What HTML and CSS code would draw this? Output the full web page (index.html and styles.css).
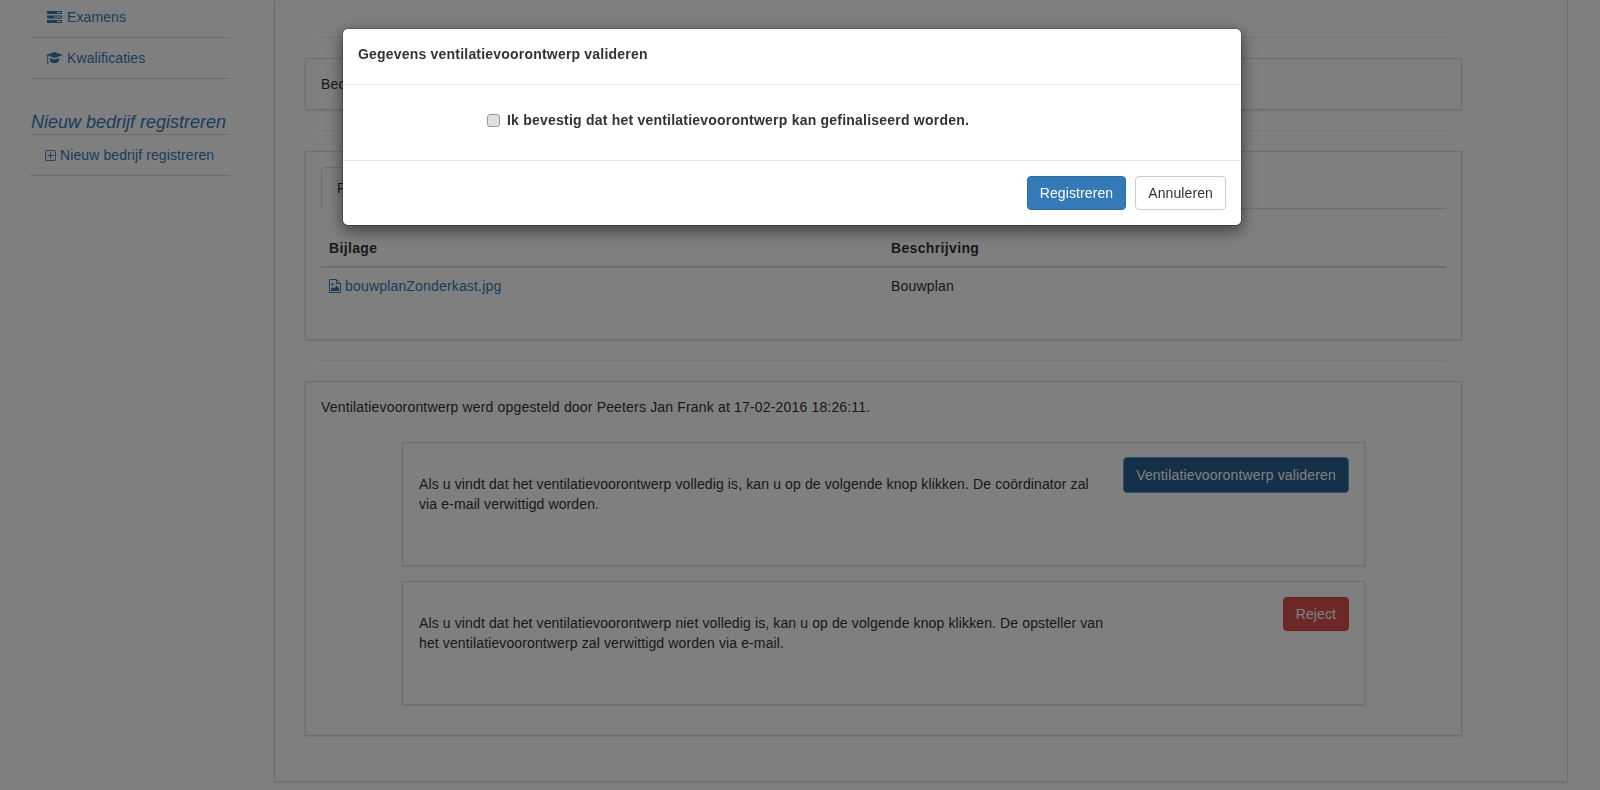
FILE: index.html
```html
<!DOCTYPE html>
<html lang="en">

<head>
    <meta charset="UTF-8">
    <meta name="viewport" content="width=device-width, initial-scale=1.0">
    <title>Ventilatievoorontwerp</title>
    <link rel="stylesheet" href="styles.css">
</head>

<body>
    <div class="page">
        <aside class="sidebar">
            <ul class="side-list">
                <li class="side-item first">
                    <a href="#">
                        <svg class="icon icon-wide" viewBox="0 0 17 12"><path fill-rule="evenodd" d="M1 0h15v3H1zM11 1v1h4V1zM1 4.500h15v3H1zM8 5.500v1h7v-1zM1 9h15v3H1zM11 10v1h4v-1z" fill="#337ab7"/></svg>
                        Examens
                    </a>
                </li>
                <li class="side-item second">
                    <a href="#">
                        <svg class="icon icon-wide" viewBox="0 0 17 12"><path d="M8.500 0 17 3 8.500 6 0 3zM4 6 8.500 7.500 13 6v3c-1 1.500-2.500 2-4.500 2S5 10.500 4 9zM1.300 3.500h.8V8l.5 3.500H.8L1.300 8z" fill="#337ab7"/></svg>
                        Kwalificaties
                    </a>
                </li>
            </ul>
            <h4 class="side-title">Nieuw bedrijf registreren</h4>
            <ul class="side-list">
                <li class="side-item plain">
                    <a href="#">
                        <svg class="icon icon-plus" viewBox="0 0 12 12"><path d="M2 .5h8A1.500 1.500 0 0 1 11.500 2v8A1.500 1.500 0 0 1 10 11.500H2A1.500 1.500 0 0 1 .5 10V2A1.500 1.500 0 0 1 2 .5zM6 2.500v7M2.500 6h7" fill="none" stroke="#337ab7"/></svg>
                        Nieuw bedrijf registreren
                    </a>
                </li>
            </ul>
        </aside>

        <main class="main-panel">
            <hr class="divider first-divider">
            <div class="box box-short">Beoordeling</div>
            <hr class="divider">
            <div class="box box-files">
                <ul class="tabs">
                    <li class="tab">Plannen</li>
                </ul>
                <div class="file-row file-head">
                    <div class="file-col">Bijlage</div>
                    <div>Beschrijving</div>
                </div>
                <div class="file-row">
                    <div class="file-col">
                        <a href="#">
                            <svg class="icon icon-file" viewBox="0 0 12 14"><path d="M.5.500h7l4 4v9H.5zM7.500.500v4h4" fill="none" stroke="#337ab7"/><circle cx="3.500" cy="5.500" r="1.200" fill="#337ab7"/><path d="M2 12V9.500L3.500 8 5 9.500 7.500 6.500 10 9v3z" fill="#337ab7"/></svg>
                            bouwplanZonderkast.jpg
                        </a>
                    </div>
                    <div>Bouwplan</div>
                </div>
            </div>
            <hr class="divider">
            <div class="box box-actions">
                <p class="author">Ventilatievoorontwerp werd opgesteld door Peeters Jan Frank at 17-02-2016 18:26:11.</p>
                <div class="action-box">
                    <p class="action-text">Als u vindt dat het ventilatievoorontwerp volledig is, kan u op de volgende knop klikken. De coördinator zal via e-mail verwittigd worden.</p>
                    <button class="btn btn-focus">Ventilatievoorontwerp valideren</button>
                </div>
                <div class="action-box">
                    <p class="action-text">Als u vindt dat het ventilatievoorontwerp niet volledig is, kan u op de volgende knop klikken. De opsteller van het ventilatievoorontwerp zal verwittigd worden via e-mail.</p>
                    <button class="btn btn-danger">Reject</button>
                </div>
            </div>
        </main>
    </div>

    <div class="backdrop"></div>

    <div class="modal">
        <div class="modal-header">Gegevens ventilatievoorontwerp valideren</div>
        <div class="modal-body">
            <label class="confirm"><input type="checkbox"> Ik bevestig dat het ventilatievoorontwerp kan gefinaliseerd worden.</label>
        </div>
        <div class="modal-footer">
            <button class="btn btn-primary">Registreren</button>
            <button class="btn btn-default">Annuleren</button>
        </div>
    </div>
</body>

</html>
```

FILE: styles.css
```css
* {
    box-sizing: border-box;
}

html,
body {
    height: 100%;
    margin: 0;
    overflow: hidden;
}

body {
    font-family: "Liberation Sans", Arial, sans-serif;
    font-size: 14px;
    line-height: 20px;
    letter-spacing: 0.17px;
    color: #333;
    background-color: #fff;
}

a {
    color: #337ab7;
    text-decoration: none;
}

p {
    margin: 0;
}

.page {
    display: flex;
    align-items: flex-start;
    padding-left: 30px;
}

/* left menu */
.sidebar {
    width: 200px;
    flex-shrink: 0;
    letter-spacing: 0.1px;
}

.side-list {
    list-style: none;
    margin: 0;
    padding: 0;
}

.side-item {
    height: 41px;
    padding: 10px 0 0 16px;
    border-bottom: 1px solid #ddd;
}

.side-item.first {
    height: 38px;
    padding-top: 7px;
}

.side-item.plain {
    padding-left: 15px;
}

.side-title {
    margin: 33px 0 0;
    padding: 0 0 2px 1px;
    height: 23px;
    font-size: 18px;
    line-height: 20px;
    font-style: italic;
    font-weight: normal;
    letter-spacing: 0;
    color: #337ab7;
    border-bottom: 1px solid #ddd;
}

.icon {
    display: inline-block;
    vertical-align: -1px;
}

.icon-wide {
    width: 17px;
    height: 12px;
}

.icon-plus {
    width: 11px;
    height: 11px;
}

.icon-file {
    width: 12px;
    height: 14px;
    vertical-align: -2px;
}

/* main content */
.main-panel {
    width: 1294px;
    height: 782px;
    margin-left: 44px;
    padding: 37px 105px 0 30px;
    border: 1px solid #ddd;
    border-top: 0;
    box-shadow: 0 1px 2px rgba(0, 0, 0, 0.1);
    flex-shrink: 0;
}

.divider {
    width: 1129px;
    height: 1px;
    margin: 20px 0 20px 13px;
    border: 0;
    background-color: #eee;
}

.first-divider {
    margin-top: 0;
}

.box {
    width: 1157px;
    border: 1px solid #ddd;
    box-shadow: 0 1px 2px rgba(0, 0, 0, 0.1);
}

.box-short {
    height: 52px;
    padding: 15px;
}

.box-files {
    height: 189px;
    padding: 15px;
}

.box-actions {
    height: 355px;
    padding: 15px;
}

.tabs {
    list-style: none;
    margin: 0;
    padding: 0;
    height: 42px;
    border-bottom: 1px solid #ddd;
    display: flex;
}

.tab {
    height: 42px;
    padding: 10px 15px;
    border: 1px solid #ddd;
    border-bottom-color: #fff;
    border-radius: 4px 4px 0 0;
}

.file-row {
    display: flex;
    padding: 8px;
}

.file-col {
    width: 562px;
}

.file-head {
    margin-top: 21px;
    font-weight: bold;
    letter-spacing: 0.35px;
    border-bottom: 2px solid #ddd;
    padding-bottom: 8px;
}

.author {
    margin-bottom: 25px;
}

.action-box {
    display: flex;
    justify-content: space-between;
    align-items: flex-start;
    width: 963px;
    height: 124px;
    margin: 0 0 15px 81px;
    padding: 15px 15px 15px 16px;
    border: 1px solid #ddd;
    box-shadow: 0 1px 2px rgba(0, 0, 0, 0.1);
}

.action-text {
    width: 690px;
    margin-top: 16px;
    letter-spacing: 0.12px;
}

/* buttons */
.btn {
    display: inline-block;
    height: 34px;
    padding: 6px 12px;
    font-family: inherit;
    font-size: 14px;
    line-height: 20px;
    letter-spacing: 0.1px;
    border: 1px solid transparent;
    border-radius: 4px;
}

.btn-primary {
    color: #fff;
    background-color: #337ab7;
    border-color: #2e6da4;
}

.btn-default {
    margin-left: 5px;
    color: #333;
    background-color: #fff;
    border-color: #ccc;
}

.btn-focus {
    height: 36px;
    margin-top: -1px;
    letter-spacing: 0.17px;
    color: #fff;
    background-color: #286090;
    border: 1px solid #5b9bd5;
}

.btn-danger {
    color: #fff;
    background-color: #d9534f;
    border-color: #d43f3a;
}

/* modal */
.backdrop {
    position: fixed;
    top: 0;
    right: 0;
    bottom: 0;
    left: 0;
    background-color: rgba(0, 0, 0, 0.5);
}

.modal {
    position: fixed;
    top: 28px;
    left: 342px;
    width: 900px;
    background-color: #fff;
    border: 1px solid rgba(0, 0, 0, 0.2);
    border-radius: 6px;
    box-shadow: 0 5px 15px rgba(0, 0, 0, 0.5);
    background-clip: padding-box;
}

.modal-header {
    height: 56px;
    padding: 15px;
    font-weight: bold;
    letter-spacing: 0.2px;
    border-bottom: 1px solid #e5e5e5;
}

.modal-body {
    height: 75px;
    padding: 25px 0 0 144px;
}

.confirm {
    display: flex;
    align-items: center;
    font-weight: bold;
    letter-spacing: 0.22px;
}

.confirm input {
    appearance: none;
    width: 13px;
    height: 13px;
    margin: 0 7px 0 0;
    background-color: #e0e0e0;
    border: 1px solid #999;
    border-radius: 3px;
}

.modal-footer {
    height: 65px;
    padding: 15px;
    text-align: right;
    border-top: 1px solid #e5e5e5;
}
```
